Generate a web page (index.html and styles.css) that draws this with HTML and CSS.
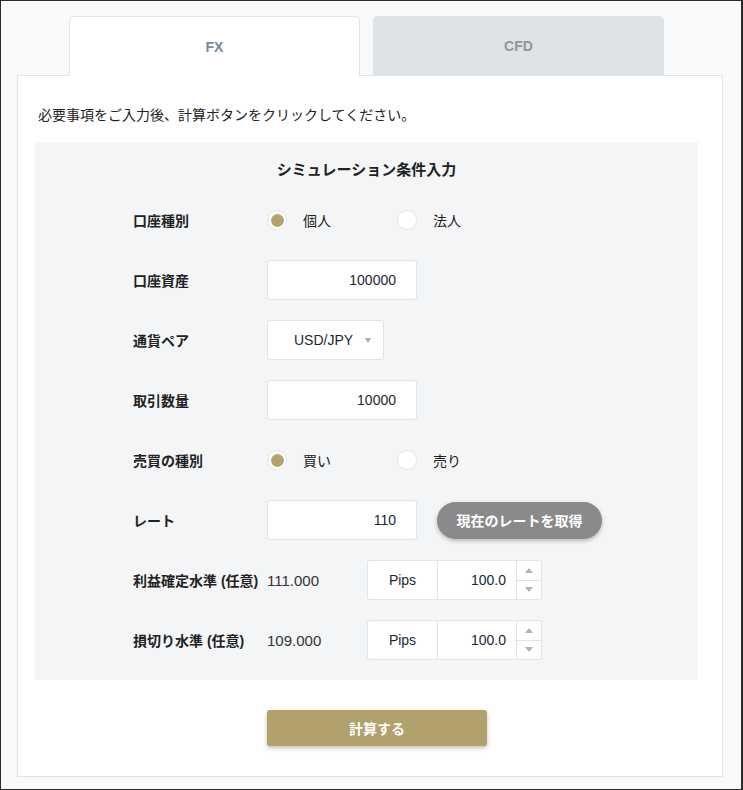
FILE: index.html
```html
<!DOCTYPE html>
<html lang="ja">
<head>
  <meta charset="UTF-8" />
  <meta name="viewport" content="width=device-width, initial-scale=1.0"/>
  <title>シミュレーション</title>
  <link rel="stylesheet" href="styles.css">
</head>
<body>

<div class="page">
  <div class="tabs">
    <div class="tab active">FX</div>
    <div class="tab">CFD</div>
  </div>

  <div class="card">
    <p class="intro">必要事項をご入力後、計算ボタンをクリックしてください。</p>

    <div class="panel">
      <h2 class="panel-title">シミュレーション条件入力</h2>

      <div class="row">
        <div class="label">口座種別</div>
        <div class="radios">
          <label class="radio"><span class="dot checked"></span>個人</label>
          <label class="radio"><span class="dot"></span>法人</label>
        </div>
      </div>

      <div class="row">
        <div class="label">口座資産</div>
        <div class="field">100000</div>
      </div>

      <div class="row">
        <div class="label">通貨ペア</div>
        <div class="select">USD/JPY<span class="caret"></span></div>
      </div>

      <div class="row">
        <div class="label">取引数量</div>
        <div class="field">10000</div>
      </div>

      <div class="row">
        <div class="label">売買の種別</div>
        <div class="radios">
          <label class="radio"><span class="dot checked"></span>買い</label>
          <label class="radio"><span class="dot"></span>売り</label>
        </div>
      </div>

      <div class="row">
        <div class="label">レート</div>
        <div class="field">110</div>
        <button class="rate-btn">現在のレートを取得</button>
      </div>

      <div class="row">
        <div class="label">利益確定水準 (任意)</div>
        <div class="value">111.000</div>
        <div class="pips">
          <div class="unit">Pips</div>
          <div class="num">100.0</div>
          <div class="spin">
            <span class="up"></span>
            <span class="down"></span>
          </div>
        </div>
      </div>

      <div class="row">
        <div class="label">損切り水準 (任意)</div>
        <div class="value">109.000</div>
        <div class="pips">
          <div class="unit">Pips</div>
          <div class="num">100.0</div>
          <div class="spin">
            <span class="up"></span>
            <span class="down"></span>
          </div>
        </div>
      </div>
    </div>

    <div class="actions">
      <button class="calc-btn">計算する</button>
    </div>
  </div>
</div>

</body>
</html>
```

FILE: styles.css
```css
* { margin: 0; padding: 0; box-sizing: border-box; }
html, body { height: 100%; }
body {
  font-family: "Liberation Sans", "Noto Sans CJK JP", sans-serif;
  font-size: 14px;
  color: #222;
  background: #f8f9fb;
}
.page {
  height: 790px;
  border: 1px solid #2a2a2a;
  border-right-width: 2px;
  padding: 15px 18px 13px 16px;
}

/* --- Tabs --- */
.tabs {
  display: flex;
  gap: 13px;
  padding-left: 52px;
}
.tab {
  width: 291px;
  height: 59px;
  display: flex;
  align-items: center;
  justify-content: center;
  font-size: 14px;
  font-weight: bold;
  color: #8e979f;
  background: #dfe3e5;
  border-radius: 5px 5px 0 0;
}
.tab.active {
  background: #fff;
  color: #7e8898;
  border: 1px solid #dde3e6;
  border-bottom: none;
  margin-bottom: -1px;
  height: 60px;
  position: relative;
  z-index: 1;
}

/* --- Card --- */
.card {
  background: #fff;
  border: 1px solid #dde3e6;
  padding: 29px 24px 30px 17px;
}
.intro {
  line-height: 20px;
  padding-left: 3px;
  margin-bottom: 17px;
}

.panel {
  background: #f3f5f7;
  padding: 18px 0 20px 98px;
}
.panel-title {
  font-size: 15px;
  font-weight: bold;
  line-height: 20px;
  text-align: center;
  margin: 0 0 20px -98px;
}
.row {
  display: flex;
  align-items: center;
  height: 40px;
  margin-bottom: 20px;
}
.row:last-child { margin-bottom: 0; }
.label {
  width: 134px;
  font-weight: bold;
  font-size: 14px;
}

/* radios */
.radios { display: flex; }
.radio {
  width: 130px;
  display: flex;
  align-items: center;
  gap: 16px;
}
.dot {
  width: 20px;
  height: 20px;
  border-radius: 50%;
  background: #fff;
  border: 1px solid #e2e6e9;
  display: flex;
  align-items: center;
  justify-content: center;
}
.dot.checked::after {
  content: "";
  width: 13px;
  height: 13px;
  border-radius: 50%;
  background: #b3a46e;
}

/* inputs */
.field, .select, .unit, .num, .spin {
  background: #fff;
  border: 1px solid #dde3e6;
  border-radius: 3px;
  height: 40px;
  display: flex;
  align-items: center;
  color: #1c2633;
}
.field {
  width: 150px;
  justify-content: flex-end;
  padding-right: 20px;
}
.select {
  width: 117px;
  padding-left: 26px;
  gap: 12px;
}
.caret {
  border-left: 3.5px solid transparent;
  border-right: 3.5px solid transparent;
  border-top: 5px solid #a5adb5;
}
.rate-btn {
  margin-left: 20px;
  width: 165px;
  height: 37px;
  border: none;
  border-radius: 19px;
  background: #8a8a8a;
  color: #fff;
  font: bold 14px "Liberation Sans", "Noto Sans CJK JP", sans-serif;
  box-shadow: 0 2px 4px rgba(0, 0, 0, 0.25);
}

.value {
  width: 100px;
  font-size: 15px;
  color: #333;
}
.pips { display: flex; }
.unit {
  width: 71px;
  justify-content: center;
  border-radius: 3px 0 0 3px;
}
.num {
  width: 80px;
  justify-content: flex-end;
  padding-right: 10px;
  margin-left: -1px;
  border-radius: 0;
}
.spin {
  width: 26px;
  margin-left: -1px;
  flex-direction: column;
  border-radius: 0 3px 3px 0;
}
.spin span {
  flex: 1;
  width: 100%;
  display: flex;
  align-items: center;
  justify-content: center;
}
.spin .up { border-bottom: 1px solid #dde3e6; }
.spin .up::after {
  content: "";
  border-left: 4px solid transparent;
  border-right: 4px solid transparent;
  border-bottom: 5px solid #aab3bc;
}
.spin .down::after {
  content: "";
  border-left: 4px solid transparent;
  border-right: 4px solid transparent;
  border-top: 5px solid #aab3bc;
}

/* calc */
.actions {
  padding: 30px 0 0 232px;
}
.calc-btn {
  width: 220px;
  height: 36px;
  border: none;
  border-radius: 3px;
  background: #b1a16c;
  color: #fff;
  font: bold 14px "Liberation Sans", "Noto Sans CJK JP", sans-serif;
  box-shadow: 0 2px 4px rgba(0, 0, 0, 0.25);
}
```
